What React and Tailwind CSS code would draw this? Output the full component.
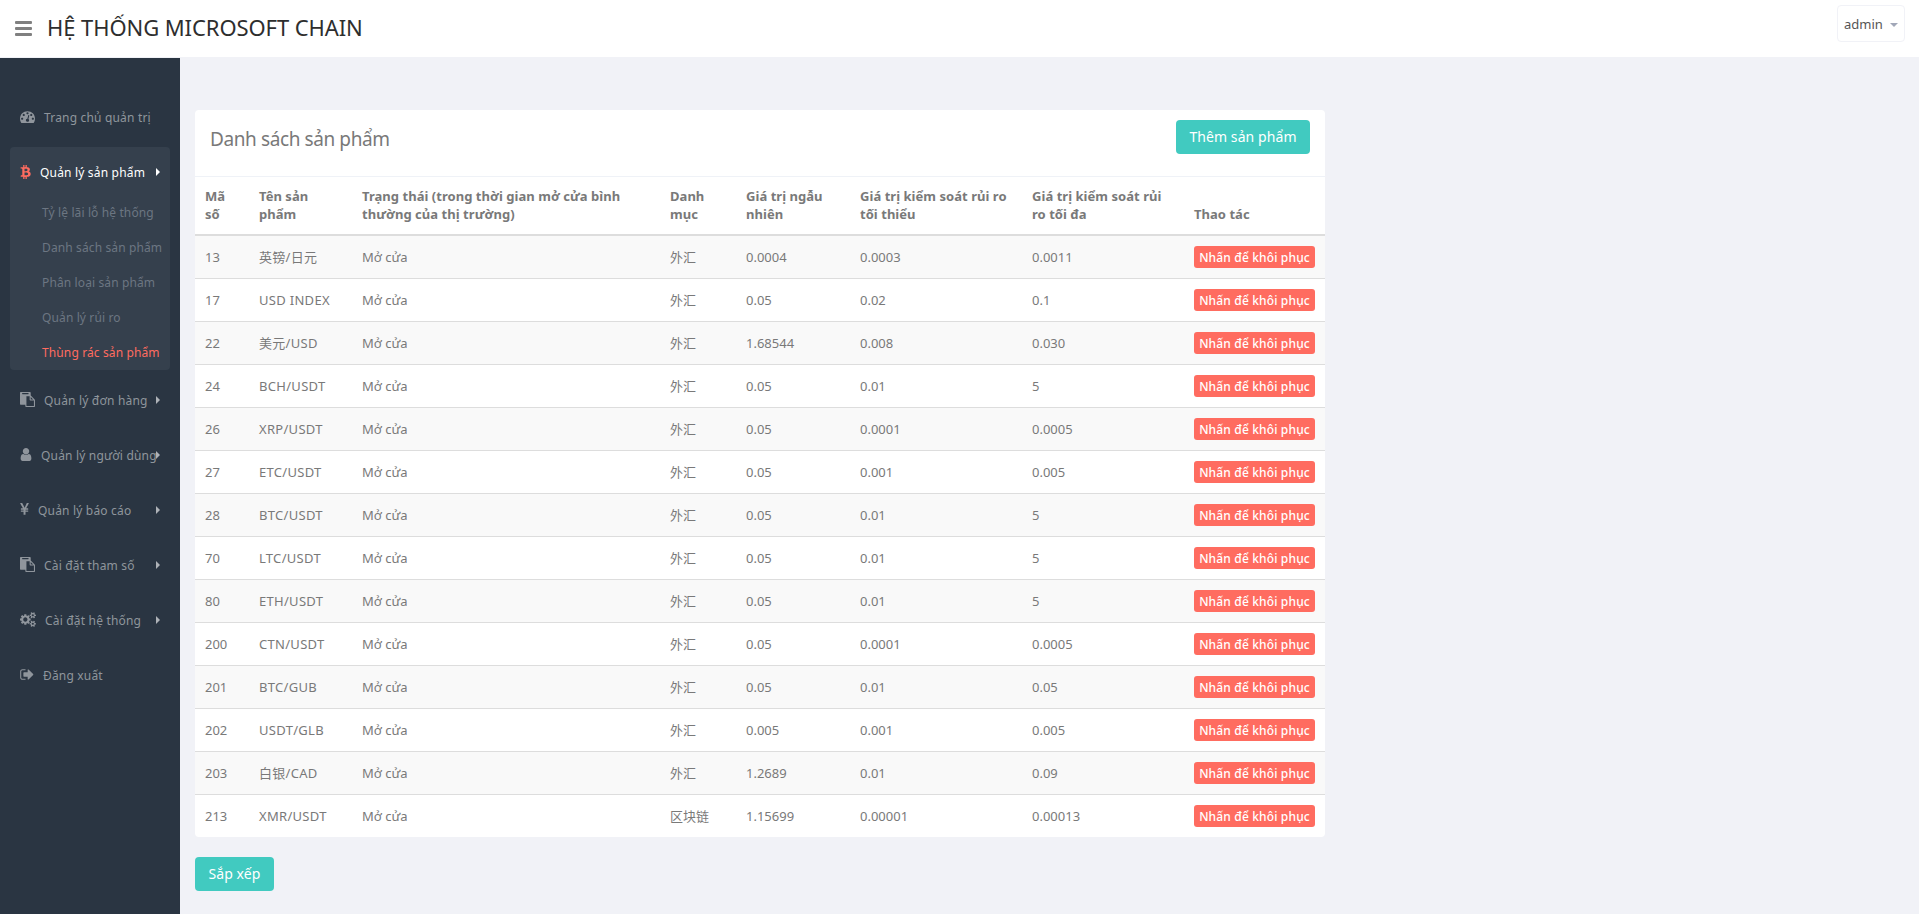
import { useState } from 'react';
import clsx from 'clsx';

// Font glyph outlines of the admin theme's icon set, 1792 units per em
const COG_SMALL = 'v140q0 16-149 31-12 27-30 52 51 113 51 138 0 4-4 7-122 71-124 71-8 0-46-47t-52-68q-20 2-30 2t-30-2q-14 21-52 68t-46 47q-2 0-124-71-4-3-4-7 0-25 51-138-18-25-30-52-149-15-149-31v-140q0-16 149-31 13-29 30-52-51-113-51-138 0-4 4-7 4-2 35-20t59-34 30-16q8 0 46 46.5t52 67.5q20-2 30-2t30 2q51-71 92-112l6-2q4 0 124 70 4 3 4 7 0 25-51 138 17 23 30 52 149 15 149 31z';

const ICONS = {
  dashboard: {
    box: '0 0 1792 1792',
    cls: 'w-[15px]',
    d: 'M384 1152q0-53-37.5-90.5t-90.5-37.5-90.5 37.5-37.5 90.5 37.5 90.5 90.5 37.5 90.5-37.5 37.5-90.5zm192-448q0-53-37.5-90.5t-90.5-37.5-90.5 37.5-37.5 90.5 37.5 90.5 90.5 37.5 90.5-37.5 37.5-90.5zm428 481l101-382q6-26-7.5-48.5t-38.5-29.5-48 6.5-30 39.5l-101 382q-60 5-107 43.5t-63 98.5q-20 77 20 146t117 89 146-20 89-117q16-60-6-117t-72-91zm660-33q0-53-37.5-90.5t-90.5-37.5-90.5 37.5-37.5 90.5 37.5 90.5 90.5 37.5 90.5-37.5 37.5-90.5zm-640-640q0-53-37.5-90.5t-90.5-37.5-90.5 37.5-37.5 90.5 37.5 90.5 90.5 37.5 90.5-37.5 37.5-90.5zm448 192q0-53-37.5-90.5t-90.5-37.5-90.5 37.5-37.5 90.5 37.5 90.5 90.5 37.5 90.5-37.5 37.5-90.5zm320 448q0 261-141 483-19 29-54 29h-1402q-35 0-54-29-141-221-141-483 0-182 71-348t191-286 286-191 348-71 348 71 286 191 191 286 71 348z',
  },
  bitcoin: {
    box: '0 0 1280 1792',
    cls: 'w-[11px]',
    d: 'M1167 640q18 182-131 258 117 28 175 103t45 214q-7 71-32.5 125t-64.5 89-97 58.5-121.5 34.5-145.5 15v255h-154v-251q-80 0-122-1v252h-154v-255q-18 0-54-.5t-55-.5h-200l31-183h111q50 0 58-51v-402h16q-6-1-16-1v-287q-13-68-89-68h-111v-164l212 1q64 0 97-1v-252h154v247q82-2 122-2v-245h154v252q79 7 140 22.5t113 45 82.5 78 36.5 114.5zm-215 545q0-36-15-64t-37-46-57.5-30.5-65.5-18.5-74-9-69-3-64.5 1-47.5 1v338q8 0 37 .5t48 .5 53-1.5 58.5-4 57-8.5 55.5-14 47.5-21 39.5-30 24.5-40 9.5-51zm-71-476q0-33-12.5-58.5t-30.5-42-48-28-55-16.5-61.5-8-58-2.5-54 1-39.5.5v307q5 0 34.5.5t46.5 0 50-2 55-5.5 51.5-11 48.5-18.5 37-27 27-38.5 9-51z',
  },
  paste: {
    box: '0 0 1792 1792',
    cls: 'w-[15px]',
    d: 'M768 1664h896v-640h-416q-40 0-68-28t-28-68v-416h-384v1152zm256-1440v-64q0-13-9.5-22.5t-22.5-9.5h-704q-13 0-22.5 9.5t-9.5 22.5v64q0 13 9.5 22.5t22.5 9.5h704q13 0 22.5-9.5t9.5-22.5zm256 672h299l-299-299v299zm512 128v672q0 40-28 68t-68 28h-960q-40 0-68-28t-28-68v-160h-544q-40 0-68-28t-28-68v-1344q0-40 28-68t68-28h1088q40 0 68 28t28 68v328q21 13 36 28l408 408q28 28 48 76t20 88z',
  },
  user: {
    box: '256 0 1280 1792',
    cls: 'w-[12px]',
    d: 'M1536 1399q0 109-62.5 187t-150.5 78h-854q-88 0-150.5-78t-62.5-187q0-85 8.5-160.5t31.5-152 58.5-131 94-89 134.5-34.5q131 128 313 128t313-128q76 0 134.5 34.5t94 89 58.5 131 31.5 152 8.5 160.5zm-256-887q0 159-112.5 271.5t-271.5 112.5-271.5-112.5-112.5-271.5 112.5-271.5 271.5-112.5 271.5 112.5 112.5 271.5z',
  },
  yen: {
    box: '382 0 1027 1792',
    cls: 'w-[9px]',
    d: 'M985.5 1536h-172q-13 0-22.5-9t-9.5-23v-330h-288q-13 0-22.5-9t-9.5-23v-103q0-13 9.5-22.5t22.5-9.5h288v-85h-288q-13 0-22.5-9t-9.5-23v-104q0-13 9.5-22.5t22.5-9.5h214l-321-578q-8-16 0-32 10-16 28-16h194q19 0 29 18l215 425q19 38 56 125 10-24 30.5-68t27.5-61l191-420q8-19 29-19h191q17 0 27 16 9 14 1 31l-313 579h215q13 0 22.5 9.5t9.5 22.5v104q0 14-9.5 23t-22.5 9h-290v85h290q13 0 22.5 9.5t9.5 22.5v103q0 14-9.5 23t-22.5 9h-290v330q0 13-9.5 22.5t-22.5 9.5z',
  },
  cogs: {
    box: '0 0 1920 1792',
    cls: 'w-[16px]',
    d: `M896 896q0-106-75-181t-181-75-181 75-75 181 75 181 181 75 181-75 75-181zm768 512q0-52-38-90t-90-38-90 38-38 90q0 53 37.5 90.5t90.5 37.5 90.5-37.5 37.5-90.5zm0-1024q0-52-38-90t-90-38-90 38-38 90q0 53 37.5 90.5t90.5 37.5 90.5-37.5 37.5-90.5zm-384 421v185q0 10-7 19.5t-16 10.5l-155 24q-11 35-32 76 34 48 90 115 7 11 7 20 0 12-7 19-23 30-82.5 89.5t-78.5 59.5q-11 0-21-7l-115-90q-37 19-77 31-11 108-23 155-7 24-30 24h-186q-11 0-20-7.5t-10-17.5l-23-153q-34-10-75-31l-118 89q-7 7-20 7-11 0-21-8-144-133-144-160 0-9 7-19 10-14 41-53t47-61q-23-44-35-82l-152-24q-10-1-17-9.5t-7-19.5v-185q0-10 7-19.5t16-10.5l155-24q11-35 32-76-34-48-90-115-7-11-7-20 0-12 7-20 22-30 82-89t79-59q11 0 21 7l115 90q34-18 77-32 11-108 23-154 7-24 30-24h186q11 0 20 7.5t10 17.5l23 153q34 10 75 31l118-89q8-7 20-7 11 0 21 8 144 133 144 160 0 8-7 19-12 16-42 54t-45 60q23 48 34 82l152 23q10 2 17 10.5t7 19.5zm640 533${COG_SMALL}m0-1024${COG_SMALL}`,
  },
  logout: {
    box: '96 0 1568 1792',
    cls: 'w-[14px]',
    d: 'M704 1440q0 4 1 20t.5 26.5-3 23.5-10 19.5-20.5 6.5h-320q-119 0-203.5-84.5t-84.5-203.5v-704q0-119 84.5-203.5t203.5-84.5h320q13 0 22.5 9.5t9.5 22.5q0 4 1 20t.5 26.5-3 23.5-10 19.5-20.5 6.5h-320q-66 0-113 47t-47 113v704q0 66 47 113t113 47h312l11.5 1 11.5 3 8 5.5 7 9 2 13.5zm928-544q0 26-19 45l-544 544q-19 19-45 19t-45-19-19-45v-288h-448q-26 0-45-19t-19-45v-384q0-26 19-45t45-19h448v-288q0-26 19-45t45-19 45 19l544 544q19 19 19 45z',
  },
};

const MENU = [
  { id: 'home', icon: 'dashboard', label: 'Trang chủ quản trị' },
  {
    id: 'products', icon: 'bitcoin', label: 'Quản lý sản phẩm',
    children: ['Tỷ lệ lãi lỗ hệ thống', 'Danh sách sản phẩm', 'Phân loại sản phẩm', 'Quản lý rủi ro', 'Thùng rác sản phẩm'],
  },
  { id: 'orders',   icon: 'paste', label: 'Quản lý đơn hàng',   children: [] },
  { id: 'users',    icon: 'user',  label: 'Quản lý người dùng', children: [] },
  { id: 'reports',  icon: 'yen',   label: 'Quản lý báo cáo',    children: [] },
  { id: 'params',   icon: 'paste', label: 'Cài đặt tham số',    children: [] },
  { id: 'settings', icon: 'cogs',  label: 'Cài đặt hệ thống',   children: [] },
  { id: 'logout',   icon: 'logout', label: 'Đăng xuất' },
];

const COLUMNS = [
  { lines: ['Mã', 'số'],                                                     width: 'w-[54px]' },
  { lines: ['Tên sản', 'phẩm'],                                              width: 'w-[103px]' },
  { lines: ['Trạng thái (trong thời gian mở cửa bình', 'thường của thị trường)'], width: 'w-[308px]' },
  { lines: ['Danh', 'mục'],                                                  width: 'w-[76px]' },
  { lines: ['Giá trị ngẫu', 'nhiên'],                                        width: 'w-[114px]' },
  { lines: ['Giá trị kiểm soát rủi ro', 'tối thiểu'],                        width: 'w-[172px]' },
  { lines: ['Giá trị kiểm soát rủi', 'ro tối đa'],                           width: 'w-[162px]' },
  { lines: ['Thao tác'],                                                     width: 'w-[141px]' },
];

// id, name, category, random, min risk, max risk
const PRODUCTS = [
  ['13', '英镑/日元', '外汇', '0.0004', '0.0003', '0.0011'],
  ['17', 'USD INDEX', '外汇', '0.05', '0.02', '0.1'],
  ['22', '美元/USD', '外汇', '1.68544', '0.008', '0.030'],
  ['24', 'BCH/USDT', '外汇', '0.05', '0.01', '5'],
  ['26', 'XRP/USDT', '外汇', '0.05', '0.0001', '0.0005'],
  ['27', 'ETC/USDT', '外汇', '0.05', '0.001', '0.005'],
  ['28', 'BTC/USDT', '外汇', '0.05', '0.01', '5'],
  ['70', 'LTC/USDT', '外汇', '0.05', '0.01', '5'],
  ['80', 'ETH/USDT', '外汇', '0.05', '0.01', '5'],
  ['200', 'CTN/USDT', '外汇', '0.05', '0.0001', '0.0005'],
  ['201', 'BTC/GUB', '外汇', '0.05', '0.01', '0.05'],
  ['202', 'USDT/GLB', '外汇', '0.005', '0.001', '0.005'],
  ['203', '白银/CAD', '外汇', '1.2689', '0.01', '0.09'],
  ['213', 'XMR/USDT', '区块链', '1.15699', '0.00001', '0.00013'],
];

const Icon = ({ name, className }) => {
  const { box, cls, d } = ICONS[name];
  return (
    <svg viewBox={box} className={clsx('mb-[2px] h-[15px] shrink-0', cls, className)} fill="currentColor">
      <path d={d} />
    </svg>
  );
};

const Header = ({ onToggle }) => (
  <header className="flex h-[58px] items-start justify-between border-b border-[#f1f2f7] bg-white">
    <div className="flex items-start pl-[15px]">
      <button type="button" onClick={onToggle} aria-label="Menu" className="mt-[21px] flex h-[15px] w-[17px] flex-col justify-between">
        <span className="h-[3px] w-full rounded-[1px] bg-[#808080]" />
        <span className="h-[3px] w-full rounded-[1px] bg-[#808080]" />
        <span className="h-[3px] w-full rounded-[1px] bg-[#808080]" />
      </button>
      <h1 className="ml-[15px] mt-[9px] text-[22px] leading-[36px] tracking-[-0.08px] text-[#2e2e2e]">HỆ THỐNG MICROSOFT CHAIN</h1>
    </div>
    <button type="button" className="mr-[14px] mt-[5px] flex h-[37px] w-[68px] items-center rounded border border-[#f1f2f7] pl-[6px] text-[#555]">
      <span className="pt-[2px]">admin</span>
      <span className="ml-[7px] mt-[2px] border-x-4 border-t-4 border-x-transparent border-t-[#a1a7b8]" />
    </button>
  </header>
);

const Sidebar = () => {
  const [openId, setOpenId]     = useState('products');
  const [activeSub, setActiveSub] = useState('Thùng rác sản phẩm');

  return (
    <aside className="w-[180px] shrink-0 bg-[#2a3542] px-[10px] pt-[34px] text-[12px] tracking-[0.12px]">
      <ul>
        {MENU.map(({ id, icon, label, children }) => {
          const open = openId === id;
          return (
            <li key={id} className={clsx('mb-[5px] rounded', open && 'bg-[#35404d]')}>
              <a
                onClick={() => setOpenId(id)}
                className={clsx('relative flex h-[50px] cursor-pointer items-center whitespace-nowrap pl-[10px]', open ? 'text-white' : 'text-[#8f959c]')}
              >
                <Icon name={icon} className={open ? 'text-[#ff6c60]' : ''} />
                <span className="ml-[9px] pt-[3px] tracking-[0.18px]">{label}</span>
                {children && (
                  <span className={clsx('absolute right-[10px] top-[21px] border-y-4 border-l-4 border-y-transparent', open ? 'border-l-white' : 'border-l-[#aeb2b7]')} />
                )}
              </a>
              {open && children?.length > 0 && (
                <ul className="-mt-[2px]">
                  {children.map((sub) => (
                    <li key={sub}>
                      <a
                        onClick={() => setActiveSub(sub)}
                        className={clsx('block h-[35px] cursor-pointer whitespace-nowrap pl-[32px] leading-[35px]', activeSub === sub ? 'text-[#ff6c60]' : 'text-[#6c7682]')}
                      >
                        {sub}
                      </a>
                    </li>
                  ))}
                </ul>
              )}
            </li>
          );
        })}
      </ul>
    </aside>
  );
};

const ProductTable = () => (
  <table className="w-full table-fixed border-collapse">
    <thead>
      <tr className="border-b-2 border-[#ddd]">
        {COLUMNS.map(({ lines, width }) => (
          <th key={lines[0] + lines[1]} className={clsx('h-[58px] whitespace-nowrap px-[10px] py-0 text-left align-bottom font-bold leading-[18px] tracking-[0.04px]', width)}>
            <div className="pb-[11px]">
              {lines.map((line) => <div key={line}>{line}</div>)}
            </div>
          </th>
        ))}
      </tr>
    </thead>
    <tbody>
      {PRODUCTS.map(([id, name, category, random, min, max], i) => (
        <tr key={id} className={clsx('h-[43px] *:px-[10px] *:pt-[1px]', i > 0 && 'border-t border-[#ddd]', i % 2 === 0 && 'bg-[#f9f9f9]')}>
          <td>{id}</td>
          <td className="tracking-[0.3px]">{name}</td>
          <td>Mở cửa</td>
          <td>{category}</td>
          <td>{random}</td>
          <td>{min}</td>
          <td>{max}</td>
          <td>
            <button type="button" className="flex h-[22px] w-[121px] items-center justify-center whitespace-nowrap rounded-[3px] bg-[#ff6c60] pt-[2px] text-[12px] font-medium tracking-[0.15px] text-white">
              Nhấn để khôi phục
            </button>
          </td>
        </tr>
      ))}
    </tbody>
  </table>
);

const App = () => {
  const [showSidebar, setShowSidebar] = useState(true);

  return (
    <div className="flex h-screen flex-col overflow-hidden bg-[#f1f2f7] font-['Noto_Sans','Noto_Sans_CJK_SC',sans-serif] text-[13px] leading-[18.57px] text-[#797979]">
      <Header onToggle={() => setShowSidebar(!showSidebar)} />
      <div className="flex min-h-0 flex-1">
        {showSidebar && <Sidebar />}
        <main className="flex-1 pl-[15px] pt-[52px]">
          <section className="w-[1130px] overflow-hidden rounded bg-white">
            <div className="flex h-[67px] items-start justify-between border-b border-[#eff2f7] px-[15px] pt-[10px]">
              <h2 className="text-[19px] leading-[38px] tracking-[-0.4px]">Danh sách sản phẩm</h2>
              <button type="button" className="h-[34px] w-[134px] rounded bg-[#41cac0] text-[14px] tracking-[0.08px] text-white">Thêm sản phẩm</button>
            </div>
            <ProductTable />
          </section>
          <button type="button" className="mt-[20px] h-[34px] w-[79px] rounded bg-[#41cac0] text-[14px] tracking-[0.08px] text-white">Sắp xếp</button>
        </main>
      </div>
    </div>
  );
};

export default App;
